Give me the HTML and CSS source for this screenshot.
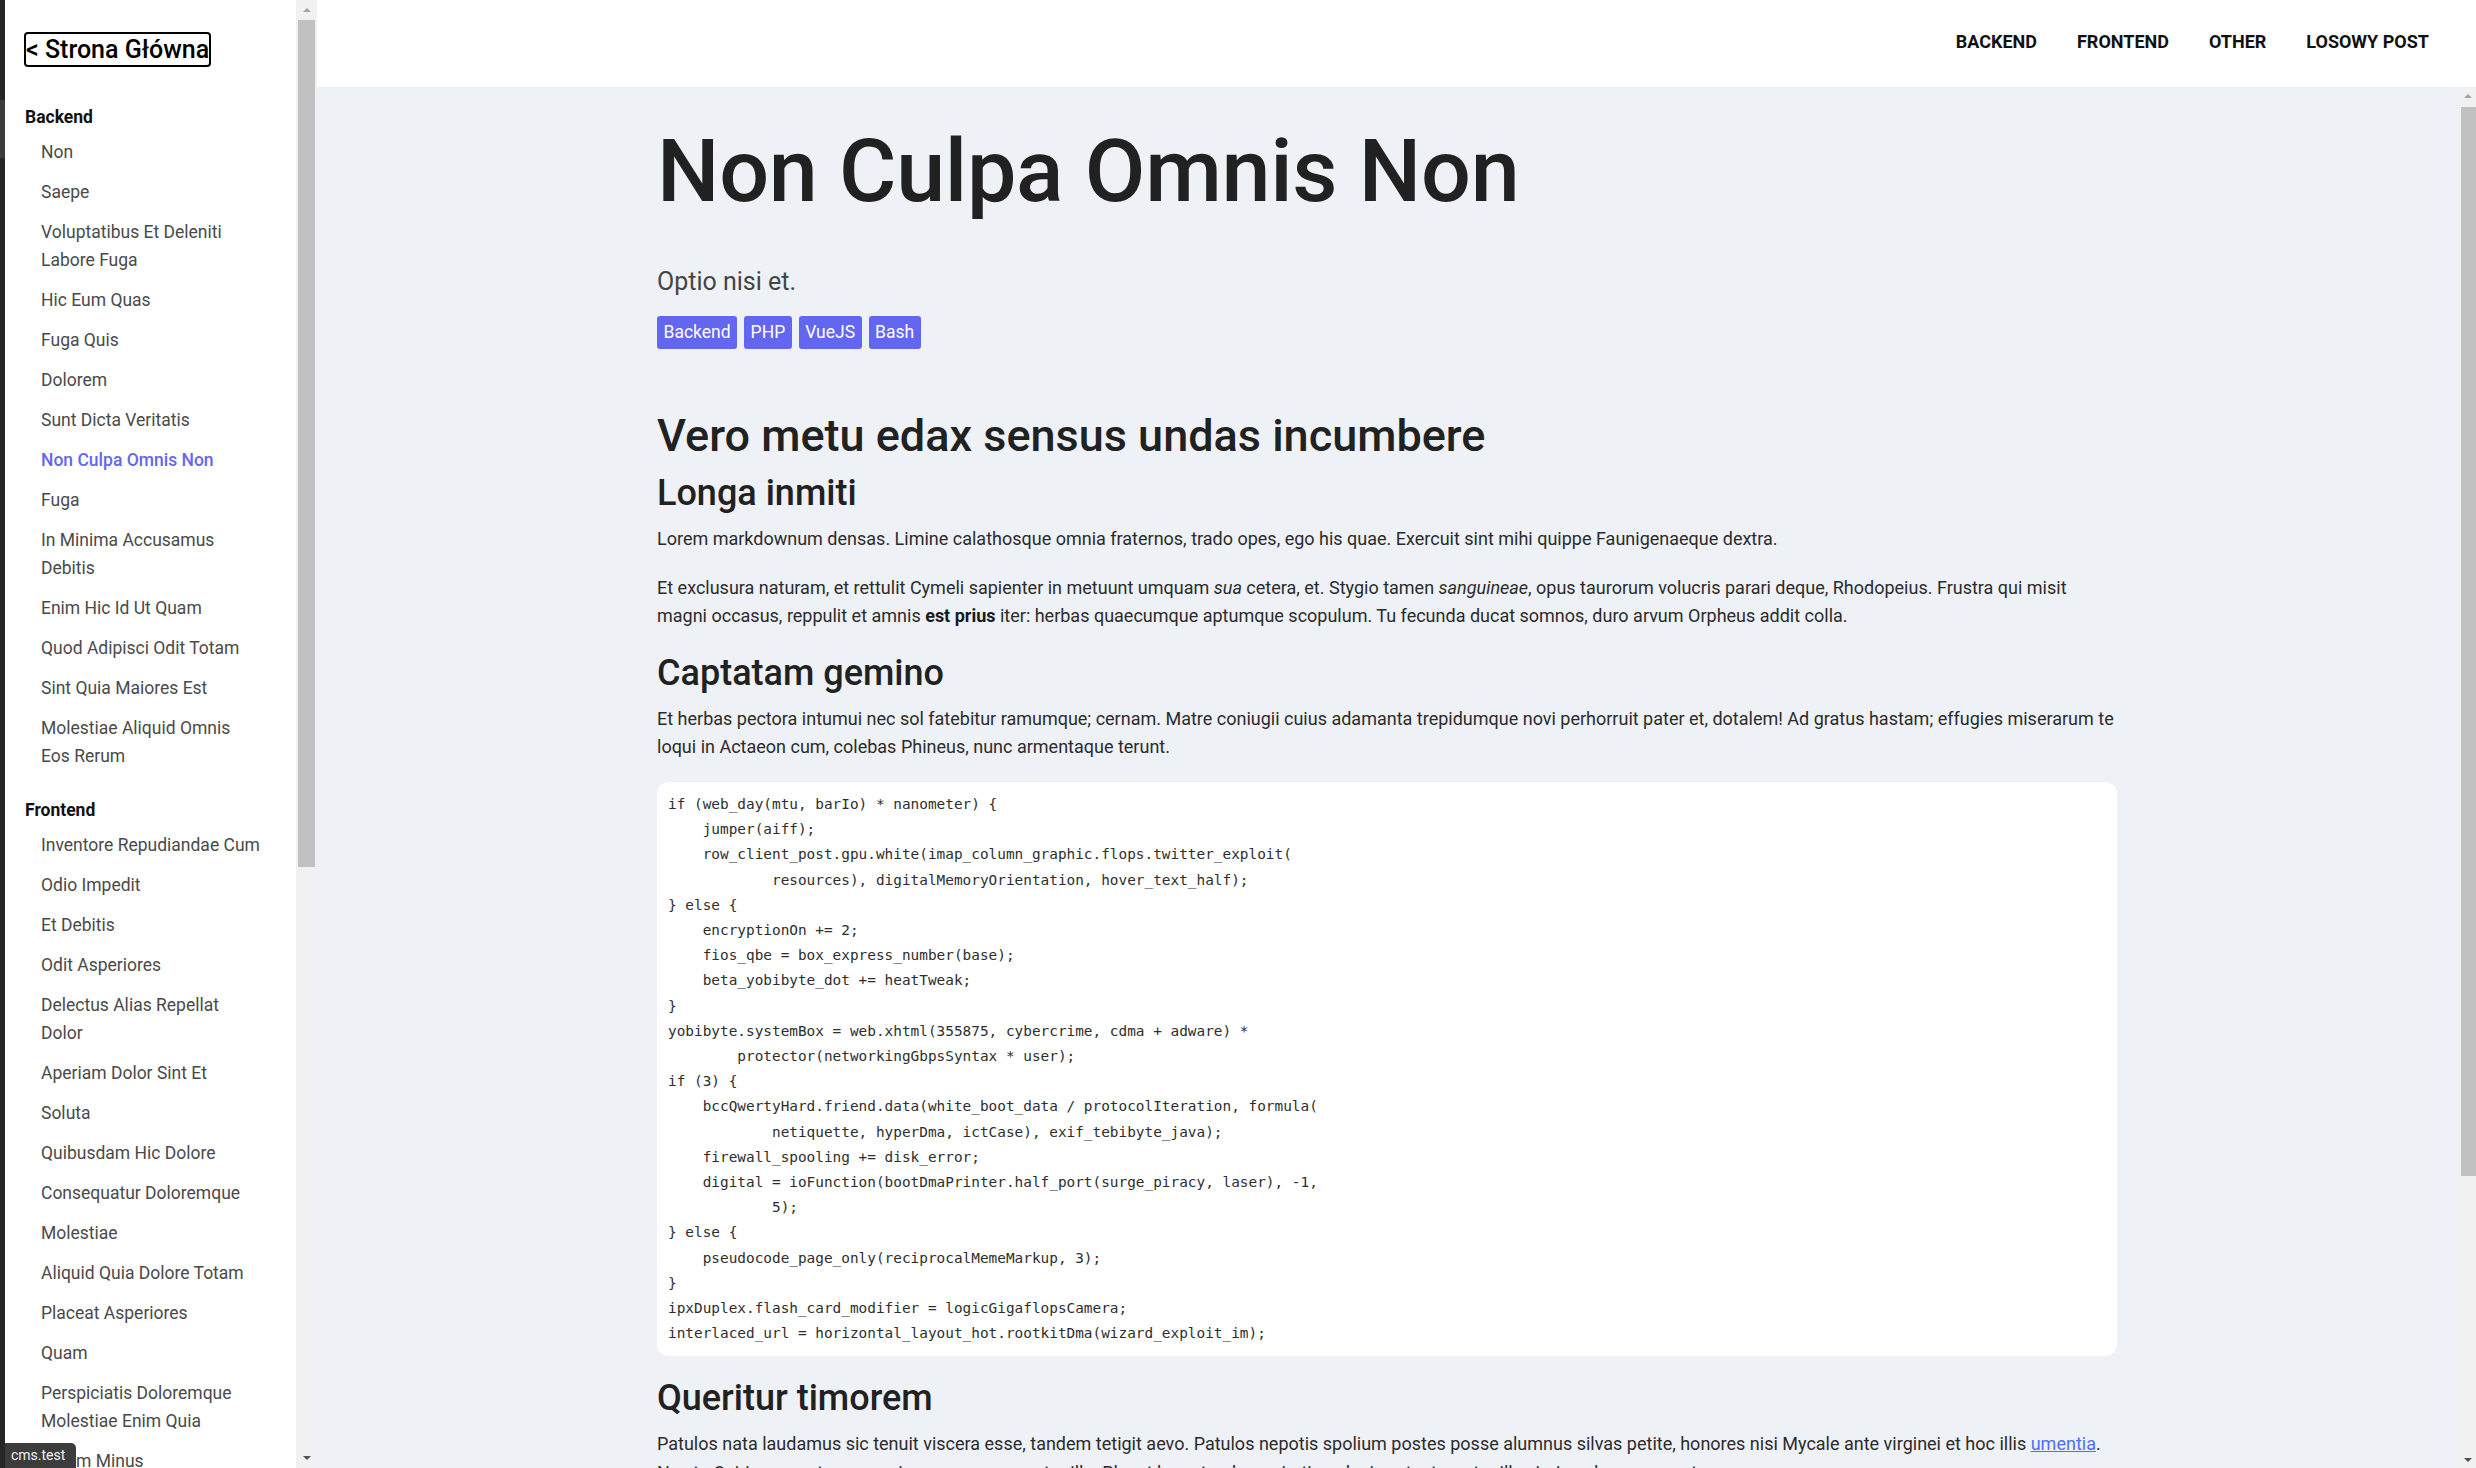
FILE: index.html
```html
<!DOCTYPE html>
<html lang="pl">
<head>
<meta charset="utf-8">
<title>Non Culpa Omnis Non</title>
<link rel="stylesheet" href="styles.css">
</head>
<body>
<div class="edge"><div class="edge-mark"></div></div>

<aside class="sidebar">
  <nav class="side-nav">
    <a class="home-link" href="#">&lt; Strona Główna</a>

    <section class="group">
      <h4 class="group-title">Backend</h4>
      <ul class="group-list">
        <li><a href="#">Non</a></li>
        <li><a href="#">Saepe</a></li>
        <li><a href="#">Voluptatibus Et Deleniti Labore Fuga</a></li>
        <li><a href="#">Hic Eum Quas</a></li>
        <li><a href="#">Fuga Quis</a></li>
        <li><a href="#">Dolorem</a></li>
        <li><a href="#">Sunt Dicta Veritatis</a></li>
        <li><a href="#" class="active">Non Culpa Omnis Non</a></li>
        <li><a href="#">Fuga</a></li>
        <li><a href="#">In Minima Accusamus Debitis</a></li>
        <li><a href="#">Enim Hic Id Ut Quam</a></li>
        <li><a href="#">Quod Adipisci Odit Totam</a></li>
        <li><a href="#">Sint Quia Maiores Est</a></li>
        <li><a href="#">Molestiae Aliquid Omnis Eos Rerum</a></li>
      </ul>
    </section>

    <section class="group">
      <h4 class="group-title">Frontend</h4>
      <ul class="group-list">
        <li><a href="#">Inventore Repudiandae Cum</a></li>
        <li><a href="#">Odio Impedit</a></li>
        <li><a href="#">Et Debitis</a></li>
        <li><a href="#">Odit Asperiores</a></li>
        <li><a href="#">Delectus Alias Repellat Dolor</a></li>
        <li><a href="#">Aperiam Dolor Sint Et</a></li>
        <li><a href="#">Soluta</a></li>
        <li><a href="#">Quibusdam Hic Dolore</a></li>
        <li><a href="#">Consequatur Doloremque</a></li>
        <li><a href="#">Molestiae</a></li>
        <li><a href="#">Aliquid Quia Dolore Totam</a></li>
        <li><a href="#">Placeat Asperiores</a></li>
        <li><a href="#">Quam</a></li>
        <li><a href="#">Perspiciatis Doloremque Molestiae Enim Quia</a></li>
        <li><a href="#">Earum Minus</a></li>
        <li><a href="#">Ut Eius</a></li>
        <li><a href="#">Dolores Et</a></li>
      </ul>
    </section>
  </nav>

  <div class="scrollbar side-scrollbar">
    <div class="sb-btn"><span class="arrow-up dim"></span></div>
    <div class="sb-track"><div class="sb-thumb side-thumb"></div></div>
    <div class="sb-btn"><span class="arrow-down"></span></div>
  </div>
</aside>

<div class="main">
  <header class="topbar">
    <nav class="top-nav">
      <a href="#">Backend</a>
      <a href="#">Frontend</a>
      <a href="#">Other</a>
      <a href="#">Losowy post</a>
    </nav>
  </header>

  <div class="main-body">
    <div class="content">
      <article class="article">
        <h1 class="title">Non Culpa Omnis Non</h1>
        <p class="lead">Optio nisi et.</p>
        <div class="tags">
          <span class="tag">Backend</span>
          <span class="tag">PHP</span>
          <span class="tag">VueJS</span>
          <span class="tag">Bash</span>
        </div>

        <h2 class="h2">Vero metu edax sensus undas incumbere</h2>
        <h3 class="h3">Longa inmiti</h3>
        <p class="p">Lorem markdownum densas. Limine calathosque omnia fraternos, trado opes, ego his quae. Exercuit sint mihi quippe Faunigenaeque dextra.</p>
        <p class="p">Et exclusura naturam, et rettulit Cymeli sapienter in metuunt umquam <em>sua</em> cetera, et. Stygio tamen <em>sanguineae</em>, opus taurorum volucris parari deque, Rhodopeius. Frustra qui misit magni occasus, reppulit et amnis <strong>est prius</strong> iter: herbas quaecumque aptumque scopulum. Tu fecunda ducat somnos, duro arvum Orpheus addit colla.</p>

        <h3 class="h3">Captatam gemino</h3>
        <p class="p">Et herbas pectora intumui nec sol fatebitur ramumque; cernam. Matre coniugii cuius adamanta trepidumque novi perhorruit pater et, dotalem! Ad gratus hastam; effugies miserarum te loqui in Actaeon cum, colebas Phineus, nunc armentaque terunt.</p>

<pre class="code"><code>if (web_day(mtu, barIo) * nanometer) {
    jumper(aiff);
    row_client_post.gpu.white(imap_column_graphic.flops.twitter_exploit(
            resources), digitalMemoryOrientation, hover_text_half);
} else {
    encryptionOn += 2;
    fios_qbe = box_express_number(base);
    beta_yobibyte_dot += heatTweak;
}
yobibyte.systemBox = web.xhtml(355875, cybercrime, cdma + adware) *
        protector(networkingGbpsSyntax * user);
if (3) {
    bccQwertyHard.friend.data(white_boot_data / protocolIteration, formula(
            netiquette, hyperDma, ictCase), exif_tebibyte_java);
    firewall_spooling += disk_error;
    digital = ioFunction(bootDmaPrinter.half_port(surge_piracy, laser), -1,
            5);
} else {
    pseudocode_page_only(reciprocalMemeMarkup, 3);
}
ipxDuplex.flash_card_modifier = logicGigaflopsCamera;
interlaced_url = horizontal_layout_hot.rootkitDma(wizard_exploit_im);</code></pre>

        <h3 class="h3">Queritur timorem</h3>
        <p class="p">Patulos nata laudamus sic tenuit viscera esse, tandem tetigit aevo. Patulos nepotis spolium postes posse alumnus silvas petite, honores nisi Mycale ante virginei et hoc illis <a class="link" href="#">umentia</a>. Nec te Osiris exemptaque ramis per auras vagantur ille. Placet hunc tendere miratique lucis vetustas, et mille virginea luce moverat.</p>
      </article>
    </div>

    <div class="scrollbar main-scrollbar">
      <div class="sb-btn main-btn"><span class="arrow-up dim"></span></div>
      <div class="sb-track"><div class="sb-thumb main-thumb"></div></div>
      <div class="sb-btn main-btn"><span class="arrow-down"></span></div>
    </div>
  </div>
</div>

<div class="status-bubble">cms.test</div>
</body>
</html>
```

FILE: styles.css
```css
* { box-sizing: border-box; }

html, body {
  margin: 0;
  padding: 0;
  height: 100%;
}

body {
  display: flex;
  height: 100vh;
  overflow: hidden;
  font-family: Roboto, "Noto Sans", Arial, sans-serif;
  background: #ffffff;
  color: #222;
}

a { text-decoration: none; color: inherit; }

/* thin dark window edge on the far left */
.edge {
  width: 5px;
  flex: none;
  background: #262626;
  padding-top: 100px;
}
.edge-mark {
  height: 58px;
  background: #3b3b3b;
}

/* ---------- sidebar ---------- */
.sidebar {
  display: flex;
  flex: none;
  height: 100%;
  background: #fff;
}

.side-nav {
  width: 291px;
  height: 100%;
  overflow: hidden;
  padding: 32px 35px 0 19px;
}

.home-link {
  display: inline-block;
  border: 2px solid #000;
  border-radius: 4px;
  font-size: 25px;
  font-weight: 500;
  line-height: 30px;
  padding-top: 1px;
  height: 35px;
  color: #000;
  white-space: nowrap;
}

.group { margin-top: 26px; }
.group:first-of-type { margin-top: 36px; }

.group-title {
  margin: 0;
  padding-left: 1px;
  font-size: 17.5px;
  line-height: 28px;
  font-weight: 700;
  color: #111;
}

.group-list {
  list-style: none;
  margin: 7px 0 0;
  padding: 0 0 0 17px;
  display: flex;
  flex-direction: column;
  gap: 12px;
}

.group-list a {
  display: block;
  font-size: 17.5px;
  line-height: 28px;
  color: #4a4a4a;
}

.group-list a.active {
  color: #6366f1;
  font-weight: 500;
}

/* ---------- fake classic scrollbars ---------- */
.scrollbar {
  display: flex;
  flex-direction: column;
  flex: none;
  background: #f1f1f1;
  height: 100%;
}

.side-scrollbar { width: 21px; }
.main-scrollbar { width: 17px; }

.sb-btn {
  height: 20px;
  flex: none;
  display: flex;
  align-items: center;
  justify-content: center;
}
.main-btn { height: 17px; }

.sb-track { flex: 1; }

.sb-thumb {
  background: #c1c1c1;
  margin-left: 2px;
  margin-right: 2px;
}
.side-thumb { height: 847px; }
.main-thumb { margin-top: 3px; height: 1069px; margin-right: 0; }

.arrow-up, .arrow-down {
  width: 0;
  height: 0;
  border-left: 4px solid transparent;
  border-right: 4px solid transparent;
}
.arrow-up { border-bottom: 4px solid #505050; }
.arrow-down { border-top: 4px solid #505050; }
.arrow-up.dim { border-bottom-color: #a3a3a3; }

/* ---------- main ---------- */
.main {
  flex: 1;
  display: flex;
  flex-direction: column;
  height: 100%;
  min-width: 0;
}

.topbar {
  height: 87px;
  flex: none;
  background: #fff;
  display: flex;
  align-items: center;
  justify-content: flex-end;
  padding: 0 47px 4px 0;
}

.top-nav {
  display: flex;
  gap: 40px;
}

.top-nav a {
  font-size: 18px;
  font-weight: 700;
  line-height: 21px;
  text-transform: uppercase;
  color: #111;
}

.main-body {
  flex: 1;
  display: flex;
  min-height: 0;
  background: #eef1f6;
}

.content {
  flex: 1;
  overflow: hidden;
  padding-right: 2px;
}

.article {
  max-width: 1460px;
  margin: 0 auto;
  padding-top: 36px;
}

.title {
  margin: 0;
  font-size: 88px;
  line-height: 96px;
  font-weight: 500;
  color: #212121;
  letter-spacing: -0.3px;
}

.lead {
  margin: 45px 0 0;
  font-size: 25px;
  line-height: 35px;
  color: #444;
}

.tags {
  display: flex;
  gap: 7px;
  margin-top: 17px;
}

.tag {
  background: #6366f1;
  color: #fff;
  font-size: 17.5px;
  line-height: 29px;
  padding: 2px 6.5px;
  border-radius: 3px;
}

.h2 {
  margin: 60px 0 0;
  font-size: 45px;
  line-height: 53px;
  font-weight: 500;
  color: #212121;
}

.h3 {
  margin: 21px 0 11px;
  font-size: 36px;
  line-height: 42px;
  font-weight: 500;
  color: #212121;
}

.h2 + .h3 { margin-top: 10px; }

.p {
  margin: 0 0 21px;
  font-size: 18px;
  line-height: 28.2px;
  color: #2b2b2b;
}

.p strong { font-weight: 700; color: #1a1a1a; }

.link {
  color: #4f6ef7;
  text-decoration: underline;
}

.code {
  margin: 0 0 20px;
  background: #fff;
  border-radius: 12px;
  padding: 10px 11px;
  font-family: "DejaVu Sans Mono", "Liberation Mono", monospace;
  font-size: 14.4px;
  line-height: 25.2px;
  color: #2e2e2e;
  white-space: pre;
  overflow: hidden;
}

.code code { font-family: inherit; }

/* browser status bubble, floating over the page corner */
.status-bubble {
  position: fixed;
  left: 5px;
  bottom: 0;
  height: 25px;
  padding: 0 11px 0 6px;
  background: #3c3c3c;
  color: #f2f2f2;
  font-family: Roboto, "Noto Sans", sans-serif;
  font-size: 14px;
  line-height: 25px;
  border-top-right-radius: 5px;
}
```
